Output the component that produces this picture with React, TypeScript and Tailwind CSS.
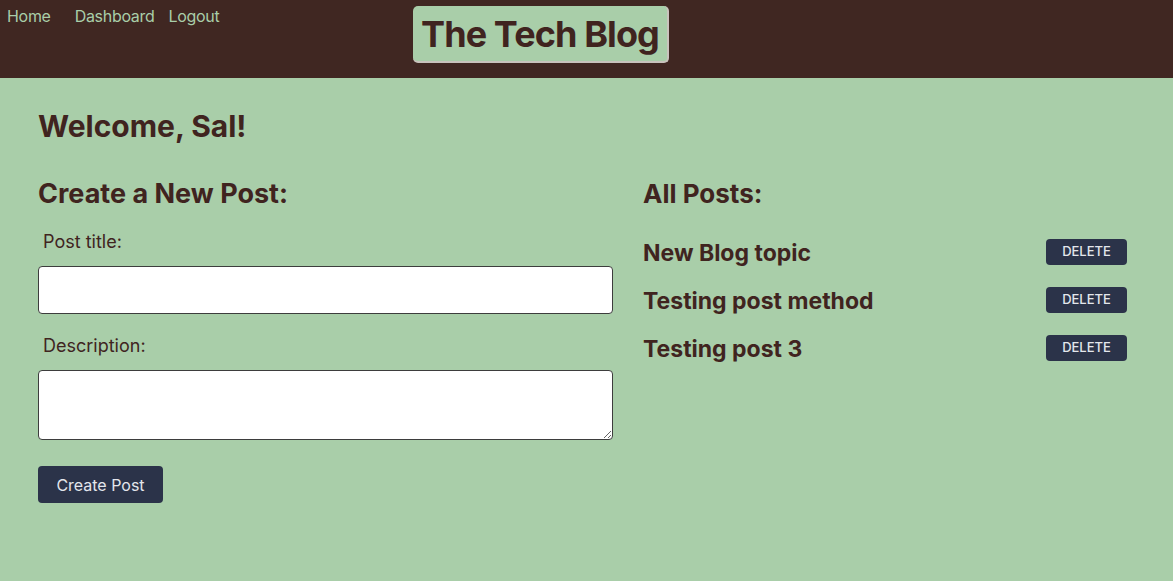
export default function App() {
  const posts = ["New Blog topic", "Testing post method", "Testing post 3"];
  return (
    <div className="min-h-[581px] w-full bg-[#a9cea9] text-[#40241f]" style={{ fontFamily: "Inter, 'Noto Sans', sans-serif" }}>
      <header className="relative h-[78px] bg-[#402722]">
        <nav className="flex items-start pt-[4px] text-[16px] tracking-[-0.3px] text-[#a9cea9]">
          <a className="ml-[7px]">Home</a>
          <a className="ml-[24px]">Dashboard</a>
          <a className="ml-[14px]">Logout</a>
        </nav>
        <div className="absolute left-[413px] top-[6px] flex h-[57px] w-[256px] items-center justify-center rounded-[5px] border-b-2 border-r-2 border-[#c9c3bd] bg-[#a9cea9]">
          <h1 className="text-[36px] font-bold leading-none tracking-[-0.9px] text-[#40241f]">The Tech Blog</h1>
        </div>
      </header>
      <main className="px-[38px] pt-[30px]">
        <h2 className="text-[30px] font-bold leading-[36px] tracking-[0px]">Welcome, Sal!</h2>
        <div className="mt-[34px] flex">
          <section className="w-[605px] pr-[30px]">
            <h3 className="text-[27px] font-bold leading-[32px]">Create a New Post:</h3>
            <label className="mt-[20px] block pl-[5px] text-[18px] leading-[24px]">Post title:</label>
            <input className="mt-[12px] block h-[48px] w-[575px] rounded-[4px] border border-[#3d3d3d] bg-white" />
            <label className="mt-[20px] block pl-[5px] text-[18px] leading-[24px]">Description:</label>
            <textarea className="mt-[12px] block h-[70px] w-[575px] rounded-[4px] border border-[#3d3d3d] bg-white" />
            <button className="mt-[26px] h-[37px] w-[125px] rounded-[4px] bg-[#2b3349] text-[16px] text-[#e3e6ec]">Create Post</button>
          </section>
          <section className="w-[484px]">
            <h3 className="text-[26px] font-bold leading-[32px]">All Posts:</h3>
            <ul className="mt-[29px] flex flex-col gap-[22px]">
              {posts.map((p) => (
                <li key={p} className="flex h-[26px] items-center justify-between">
                  <span className="relative top-[1px] text-[23px] font-bold leading-[26px]">{p}</span>
                  <button className="h-[26px] w-[81px] rounded-[4px] bg-[#2b3349] text-[13px] font-medium text-[#e3e6ec]">DELETE</button>
                </li>
              ))}
            </ul>
          </section>
        </div>
      </main>
    </div>
  );
}
